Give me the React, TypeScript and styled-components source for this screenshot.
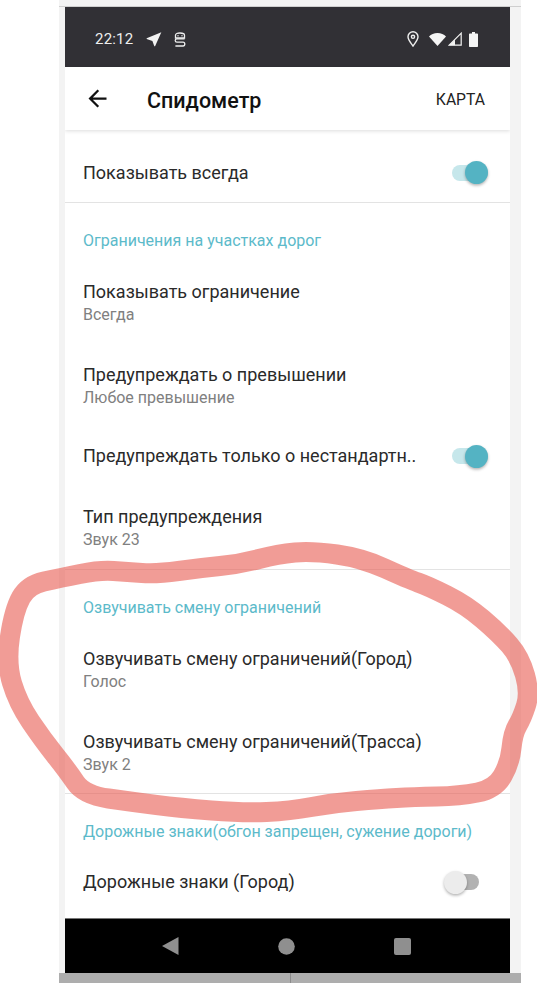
import styled, { createGlobalStyle } from "styled-components";

const GlobalStyle = createGlobalStyle`
  html, body {
    margin: 0;
    padding: 0;
    background: #fff;
    font-family: Roboto, "Noto Sans", sans-serif;
  }
`;

const Page = styled.div`
  position: relative;
  width: 537px;
  height: 983px;
  overflow: hidden;
  background: #fff;
`;

const Frame = styled.div`
  display: flex;
  flex-direction: column;
  width: 462px;
  height: 983px;
  margin-left: 59px;
  background: #f3f3f3;
`;

const TopStrip = styled.div`
  flex: none;
  height: 6px;
  border-bottom: 1px solid #cfcfcf;
`;

const Phone = styled.div`
  flex: 1;
  display: flex;
  flex-direction: column;
  min-height: 0;
  overflow: hidden;
  margin: 0 11px 0 6px;
  background: #fff;
`;

const BottomStrip = styled.div`
  flex: none;
  display: flex;
  height: 10px;
  background: #adadad;
  padding-left: 231px;
  &::before {
    content: "";
    width: 1px;
    background: #8c8c8c;
  }
`;

const StatusBar = styled.div`
  flex: none;
  display: flex;
  align-items: center;
  box-sizing: border-box;
  height: 60px;
  padding: 4px 32px 0 30px;
  background: #313035;
  color: #eee;
`;

const Time = styled.span`
  font-size: 15px;
  letter-spacing: 0.2px;
  margin-right: 13px;
`;

const StatusIcon = styled.svg<{ $gap?: number }>`
  display: block;
  flex: none;
  margin-right: ${(p) => p.$gap ?? 0}px;
`;

const Spacer = styled.div`
  flex: 1;
`;

const AppBar = styled.header`
  position: relative;
  z-index: 1;
  flex: none;
  display: flex;
  align-items: center;
  height: 63px;
  padding: 0 25px 0 19px;
  background: #fff;
  box-shadow: 0 1px 4px rgba(0, 0, 0, 0.14);
`;

const BackIcon = styled.svg`
  display: block;
  flex: none;
  margin-right: 36px;
  margin-top: -1px;
`;

const Title = styled.h1`
  flex: 1;
  margin: 3px 0 0;
  font-size: 21.5px;
  font-weight: 500;
  color: #111;
`;

const MapButton = styled.span`
  font-size: 15.7px;
  color: #222;
  margin-top: 1px;
`;

const Content = styled.main`
  flex: 1;
  min-height: 0;
  overflow: hidden;
  padding-top: 13px;
`;

const SectionLabel = styled.div`
  padding: 28px 18px 10px;
  font-size: 16px;
  line-height: 20px;
  color: #5cbaca;
  white-space: nowrap;
`;

const Group = styled.section<{ $divider?: boolean }>`
  border-bottom: ${(p) => (p.$divider ? "1px solid #e3e3e3" : "none")};
`;

const Item = styled.div`
  height: 82.7px;
  box-sizing: border-box;
  padding: 20px 18px 0;
`;

const ItemTitle = styled.div`
  font-size: 18px;
  line-height: 22px;
  color: #2a2a2a;
  white-space: nowrap;
`;

const ItemValue = styled.div`
  font-size: 16px;
  line-height: 23px;
  color: #808080;
`;

const ToggleRow = styled.div<{ $height?: number }>`
  display: flex;
  align-items: center;
  justify-content: space-between;
  height: ${(p) => p.$height ?? 60}px;
  padding-left: 18px;
`;

const Track = styled.div<{ $on: boolean }>`
  position: relative;
  flex: none;
  width: ${(p) => (p.$on ? 36 : 34)}px;
  height: 16px;
  margin-right: ${(p) => (p.$on ? 22 : 31)}px;
  border-radius: 8px;
  background: ${(p) => (p.$on ? "#c6e7eb" : "#b2b2b2")};
`;

const Knob = styled.div<{ $on: boolean }>`
  position: absolute;
  top: -3.5px;
  width: 23px;
  height: 23px;
  border-radius: 50%;
  ${(p) => (p.$on ? "right: 0;" : "left: -1px;")}
  background: ${(p) => (p.$on ? "#54b3c3" : "#ececec")};
  box-shadow: 0 1.5px 3px rgba(0, 0, 0, 0.3);
`;

const NavBar = styled.nav`
  flex: none;
  display: grid;
  grid-template-columns: 115px 116px 116px;
  justify-items: center;
  align-items: center;
  height: 54px;
  padding-left: 48px;
  border-top: 1px solid #777;
  background: #000;
`;

const Scribble = styled.svg`
  position: absolute;
  left: 0;
  top: 0;
  pointer-events: none;
`;

const scribblePoints: [number, number][] = [
  [60, 578], [100, 570], [127, 572], [157, 574], [200, 568], [240, 564], [278, 554], [312, 551],
  [362, 558], [408, 579], [428, 586], [466, 605], [499, 633], [520, 657], [530, 693], [522, 718],
  [513, 733], [510, 763], [495, 789], [460, 796], [413, 797], [380, 799], [333, 803], [290, 811],
  [243, 813], [180, 808], [133, 802], [84, 795], [67, 770], [43, 740], [18, 703], [6, 663],
  [14, 610], [28, 585],
];

// 点の中間を結んでなめらかな閉じた線にする
function smoothPath(points: [number, number][]) {
  const mid = (a: [number, number], b: [number, number]) => [(a[0] + b[0]) / 2, (a[1] + b[1]) / 2];
  const start = mid(points[points.length - 1], points[0]);
  let d = `M${start[0]} ${start[1]}`;
  points.forEach((p, i) => {
    const m = mid(p, points[(i + 1) % points.length]);
    d += ` Q${p[0]} ${p[1]} ${m[0]} ${m[1]}`;
  });
  return d + " Z";
}

const Toggle = ({ on }: { on: boolean }) => (
  <Track $on={on}>
    <Knob $on={on} />
  </Track>
);

const SettingItem = ({ title, value }: { title: string; value: string }) => (
  <Item>
    <ItemTitle>{title}</ItemTitle>
    <ItemValue>{value}</ItemValue>
  </Item>
);

const App = () => {
  return (
    <Page>
      <GlobalStyle />
      <Frame>
        <TopStrip />
        <Phone>
          <StatusBar>
            <Time>22:12</Time>
            <StatusIcon width="16" height="16" viewBox="0 0 24 24" fill="#f2f2f2" $gap={12}>
              <path d="M23 2L1 10.8v1.1l8.6 3 2.9 8.1h1.1L23 2z" />
            </StatusIcon>
            <StatusIcon width="12" height="15" viewBox="0 0 12 15" fill="none" stroke="#eee" strokeWidth="1.3">
              <path d="M1.5 6V3.2C1.5 1.6 3.4 1 6 1s4.5.6 4.5 2.2V6z" />
              <path d="M10.6 6.8H3C.6 6.8.6 10.2 3 10.2H9C11.4 10.2 11.4 14 9 14H1.4" />
              <circle cx="4" cy="3.7" r=".7" fill="#eee" stroke="none" />
              <circle cx="8" cy="3.7" r=".7" fill="#eee" stroke="none" />
            </StatusIcon>
            <Spacer />
            <StatusIcon width="12" height="16" viewBox="0 0 12 16" fill="none" stroke="#eee" strokeWidth="1.4" $gap={10}>
              <path d="M6 15C4 12 1 9 1 5.8A5 5 0 0 1 11 5.8C11 9 8 12 6 15z" />
              <circle cx="6" cy="5.8" r="1.6" />
            </StatusIcon>
            <StatusIcon width="17" height="13" viewBox="0 0 17 13" fill="#f5f5f5" $gap={2}>
              <path d="M0 3.6C2 1.3 5 0 8.5 0S15 1.3 17 3.6L8.5 13z" />
            </StatusIcon>
            <StatusIcon width="14" height="14" viewBox="0 0 14 14" fill="none" $gap={7}>
              <path d="M13.2 1.2V13.2H1.2z" stroke="#f2f2f2" strokeWidth="1.2" />
              <path d="M7 7.4V13.2H1.2z" fill="#f2f2f2" />
            </StatusIcon>
            <StatusIcon width="9" height="15" viewBox="0 0 9 15" fill="#f5f5f5">
              <path d="M3 0h3v1.5h2.2a.8.8 0 0 1 .8.8v12a.7.7 0 0 1-.7.7H.7a.7.7 0 0 1-.7-.7v-12a.8.8 0 0 1 .8-.8H3z" />
            </StatusIcon>
          </StatusBar>
          <AppBar>
            <BackIcon width="27" height="27" viewBox="0 0 24 24" fill="#111">
              <path d="M20 11H7.83l5.59-5.59L12 4l-8 8 8 8 1.41-1.41L7.83 13H20v-2z" />
            </BackIcon>
            <Title>Спидометр</Title>
            <MapButton>КАРТА</MapButton>
          </AppBar>
          <Content>
            <Group $divider>
              <ToggleRow $height={59}>
                <ItemTitle>Показывать всегда</ItemTitle>
                <Toggle on />
              </ToggleRow>
            </Group>
            <Group $divider>
              <SectionLabel>Ограничения на участках дорог</SectionLabel>
              <SettingItem title="Показывать ограничение" value="Всегда" />
              <SettingItem title="Предупреждать о превышении" value="Любое превышение" />
              <ToggleRow>
                <ItemTitle>Предупреждать только о нестандартн..</ItemTitle>
                <Toggle on />
              </ToggleRow>
              <SettingItem title="Тип предупреждения" value="Звук 23" />
            </Group>
            <Group $divider>
              <SectionLabel>Озвучивать смену ограничений</SectionLabel>
              <SettingItem title="Озвучивать смену ограничений(Город)" value="Голос" />
              <SettingItem title="Озвучивать смену ограничений(Трасса)" value="Звук 2" />
            </Group>
            <Group>
              <SectionLabel>Дорожные знаки(обгон запрещен, сужение дороги)</SectionLabel>
              <ToggleRow>
                <ItemTitle>Дорожные знаки (Город)</ItemTitle>
                <Toggle on={false} />
              </ToggleRow>
            </Group>
          </Content>
          <NavBar>
            <svg width="17" height="18" viewBox="0 0 17 18" fill="#8f8f8f">
              <path d="M16.5 0v18L0 9z" />
            </svg>
            <svg width="17" height="17" viewBox="0 0 17 17" fill="#8f8f8f">
              <circle cx="8.5" cy="8.5" r="8.3" />
            </svg>
            <svg width="17" height="17" viewBox="0 0 17 17" fill="#8f8f8f">
              <rect width="17" height="17" rx="2" />
            </svg>
          </NavBar>
        </Phone>
        <BottomStrip />
      </Frame>
      <Scribble width="537" height="983" viewBox="0 0 537 983" fill="none">
        <path
          d={smoothPath(scribblePoints)}
          stroke="rgb(232, 90, 80)"
          strokeOpacity="0.6"
          strokeWidth="20"
          strokeLinejoin="round"
        />
      </Scribble>
    </Page>
  );
};

export default App;
